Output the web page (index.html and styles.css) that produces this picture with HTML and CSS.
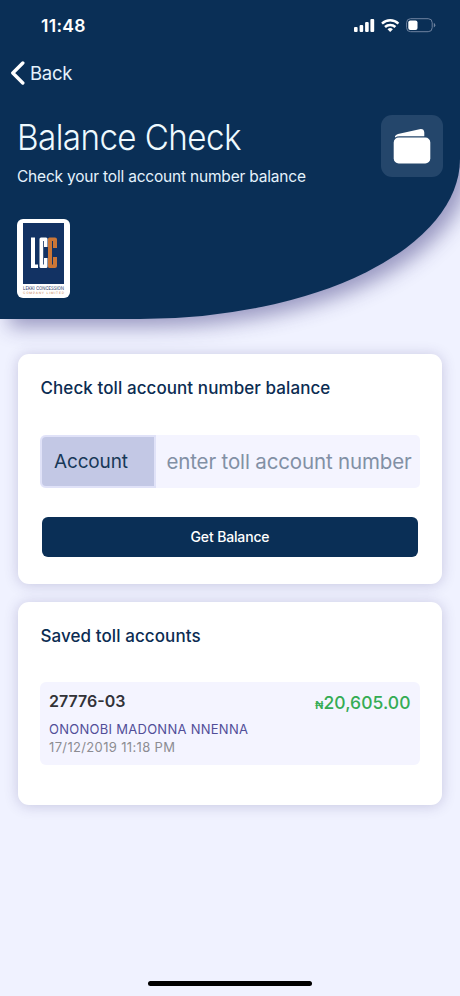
FILE: index.html
```html
<!DOCTYPE html>
<html lang="en">
<head>
<meta charset="utf-8">
<title>Balance Check</title>
<link rel="stylesheet" href="styles.css">
</head>
<body>
<div class="screen">
  <header class="hero">
    <div class="status">
      <span class="time">11:48</span>
      <svg class="status-icons" width="84" height="18" viewBox="0 0 84 18">
        <g fill="#fff">
          <rect x="1" y="11" width="3.6" height="5" rx="1"/>
          <rect x="6.6" y="9" width="3.6" height="7" rx="1"/>
          <rect x="12.1" y="6" width="3.6" height="10" rx="1"/>
          <rect x="17.4" y="3" width="3.8" height="13" rx="1"/>
        </g>
        <g fill="none" stroke="#fff" stroke-width="2.5">
          <path d="M29 7.6a12 12 0 0 1 16.4 0"/>
          <path d="M32 11a7.6 7.6 0 0 1 10.4 0"/>
        </g>
        <path d="M34.5 13.2a4 4 0 0 1 5.4 0L37.2 16z" fill="#fff"/>
        <rect x="53.6" y="2.7" width="25.6" height="13" rx="4" fill="none" stroke="#6f83a0"/>
        <rect x="55.3" y="4.5" width="9.2" height="9.4" rx="2" fill="#fff"/>
        <path d="M80.8 7v4.4q1.500-.6 1.500-2.200t-1.500-2.200z" fill="#6f83a0"/>
      </svg>
    </div>
    <div class="nav">
      <svg width="14" height="24" viewBox="0 0 14 24"><path d="M11.800 2L1.800 12 11.800 22" fill="none" stroke="#fff" stroke-width="3.400" stroke-linecap="round" stroke-linejoin="round"/></svg>
      <span class="back">Back</span>
    </div>
    <div class="heading">
      <div class="titles">
        <h1>Balance Check</h1>
        <p>Check your toll account number balance</p>
      </div>
      <div class="wallet">
        <svg width="38" height="36" viewBox="0 0 38 36">
          <path d="M2 8.200Q2.600 6.500 5 5.900L26.500 1.200Q31 .4 31.300 4.500V8.200H7.500Q4 8 2 9.500z" fill="#fff"/>
          <rect x=".7" y="9.500" width="36.600" height="26" rx="5" fill="#fff"/>
        </svg>
      </div>
    </div>
    <div class="logo">
      <svg width="53" height="79" viewBox="0 0 53 79">
        <rect width="53" height="79" rx="6" fill="#fff"/>
        <rect x="6" y="4" width="41" height="61" fill="#123263"/>
        <path d="M14 18.500h4V45.500h3V49h-7z" fill="#fff"/>
        <path d="M24 18.500h5q1.500 0 1.500 1.500V28H27V22h-.8V45.500h.8V39h3.500v8.500q0 1.500-1.500 1.500h-5q-1.500 0-1.500-1.500V20q0-1.500 1.500-1.500z" fill="#fff"/>
        <path d="M32.500 18.500h5.500q2 0 2 2V29h-4V22h-1V45.500h1V38h4v9q0 2-2 2h-5.500q-1.500 0-1.500-1.500V20q0-1.500 1.500-1.500z" fill="#cb7637"/>
        <text x="6" y="71" font-size="5.200" textLength="41" lengthAdjust="spacingAndGlyphs" fill="#172e60">LEKKI CONCESSION</text>
        <text x="6" y="75" font-size="3.200" textLength="41" lengthAdjust="spacing" fill="#c47a48">COMPANY LIMITED</text>
      </svg>
    </div>
  </header>

  <main class="content">
    <section class="card check">
      <h2>Check toll account number balance</h2>
      <div class="field">
        <span class="label">Account</span>
        <span class="placeholder">enter toll account number</span>
      </div>
      <div class="button"><span>Get Balance</span></div>
    </section>
    <section class="card saved">
      <h2>Saved toll accounts</h2>
      <div class="account">
        <div>
          <div class="number">27776-03</div>
          <div class="name">ONONOBI MADONNA NNENNA</div>
          <div class="date">17/12/2019 11:18 PM</div>
        </div>
        <div class="amount"><small>₦</small><span>20,605.00</span></div>
      </div>
    </section>
  </main>
  <div class="home"></div>
</div>
</body>
</html>
```
FILE: styles.css
```css
* { box-sizing: border-box; }
body { margin: 0; background: #f0f2ff; font-family: Inter, "Liberation Sans", sans-serif; }
h1, h2, p { margin: 0; }
svg { display: block; }
.screen { width: 460px; height: 996px; display: flex; flex-direction: column; overflow: hidden; }
.hero { height: 319px; flex: none; background: #0a2f56; color: #fff; border-bottom-right-radius: 320px 160px; box-shadow: 9px 8px 20px rgba(50, 45, 120, .46); }
.status { display: flex; justify-content: space-between; height: 50px; padding: 16px 23px 0 41px; }
.time { font-size: 17.500px; line-height: 20px; font-weight: 600; letter-spacing: .3px; }
.nav { display: flex; align-items: center; gap: 5px; height: 46px; padding-left: 11px; }
.back { font-size: 18.500px; line-height: 24px; letter-spacing: -.3px; color: #e4f2fc; }
.heading { display: flex; justify-content: space-between; padding: 19px 17px 0; height: 123px; }
h1 { font-size: 36px; line-height: 45px; font-weight: 300; letter-spacing: -.65px; transform: scaleX(.923); transform-origin: left; white-space: nowrap; color: #eefaff; }
.titles p { margin-top: 7px; font-size: 15.500px; line-height: 20px; letter-spacing: -.2px; white-space: nowrap; color: #e4f2fc; }
.wallet { width: 62px; height: 62px; border-radius: 11px; background: #24466b; display: flex; justify-content: center; padding-top: 13px; }
.logo { padding-left: 17px; }
.logo text { text-rendering: geometricPrecision; }
.content { padding: 35px 18px 0; display: flex; flex-direction: column; gap: 18px; flex: 1; }
.card { background: #fff; border-radius: 11px; padding: 23px 22px 0; box-shadow: 0 1px 14px rgba(60, 50, 120, .23); }
.check { height: 230px; }
.saved { height: 203px; }
h2 { padding-left: .5px; font-size: 17px; line-height: 22px; font-weight: 450; letter-spacing: .08px; color: #0b2c52; white-space: nowrap; }
.field { margin-top: 36px; height: 53px; display: flex; align-items: center; background: #f4f4ff; border-radius: 5px; }
.label { width: 116px; height: 53px; border: 2px solid #e0e2f8; border-radius: 6px 0 0 6px; background: #c3c8e5; color: #183858; font-size: 19px; line-height: 49px; letter-spacing: -.15px; padding-left: 12px; }
.placeholder { padding-left: 10.500px; font-size: 20.500px; letter-spacing: -.15px; color: #8290a5; white-space: nowrap; }
.button { margin: 29px 2px 0; height: 40px; border-radius: 6px; background: #0a2f56; color: #fff; font-size: 14px; font-weight: 450; line-height: 40px; letter-spacing: -.15px; text-align: center; }
.account { margin-top: 35px; height: 83px; border-radius: 6px; background: #f4f4ff; padding: 9px 9.500px 0 9px; display: flex; justify-content: space-between; }
.number { font-size: 16px; line-height: 20px; font-weight: 600; color: #323238; }
.name { margin-top: 9px; font-size: 13px; line-height: 18px; letter-spacing: .27px; color: #514e98; white-space: nowrap; }
.date { font-size: 13px; line-height: 18px; letter-spacing: .35px; color: #8c8c92; white-space: nowrap; }
.amount { color: #34ac54; font-size: 17.500px; line-height: 23px; font-weight: 500; letter-spacing: .05px; white-space: nowrap; }
.amount small { font-size: 11px; font-weight: 600; }
.home { width: 164px; height: 5px; border-radius: 3px; background: #000; margin: 0 auto 10px; }
```
